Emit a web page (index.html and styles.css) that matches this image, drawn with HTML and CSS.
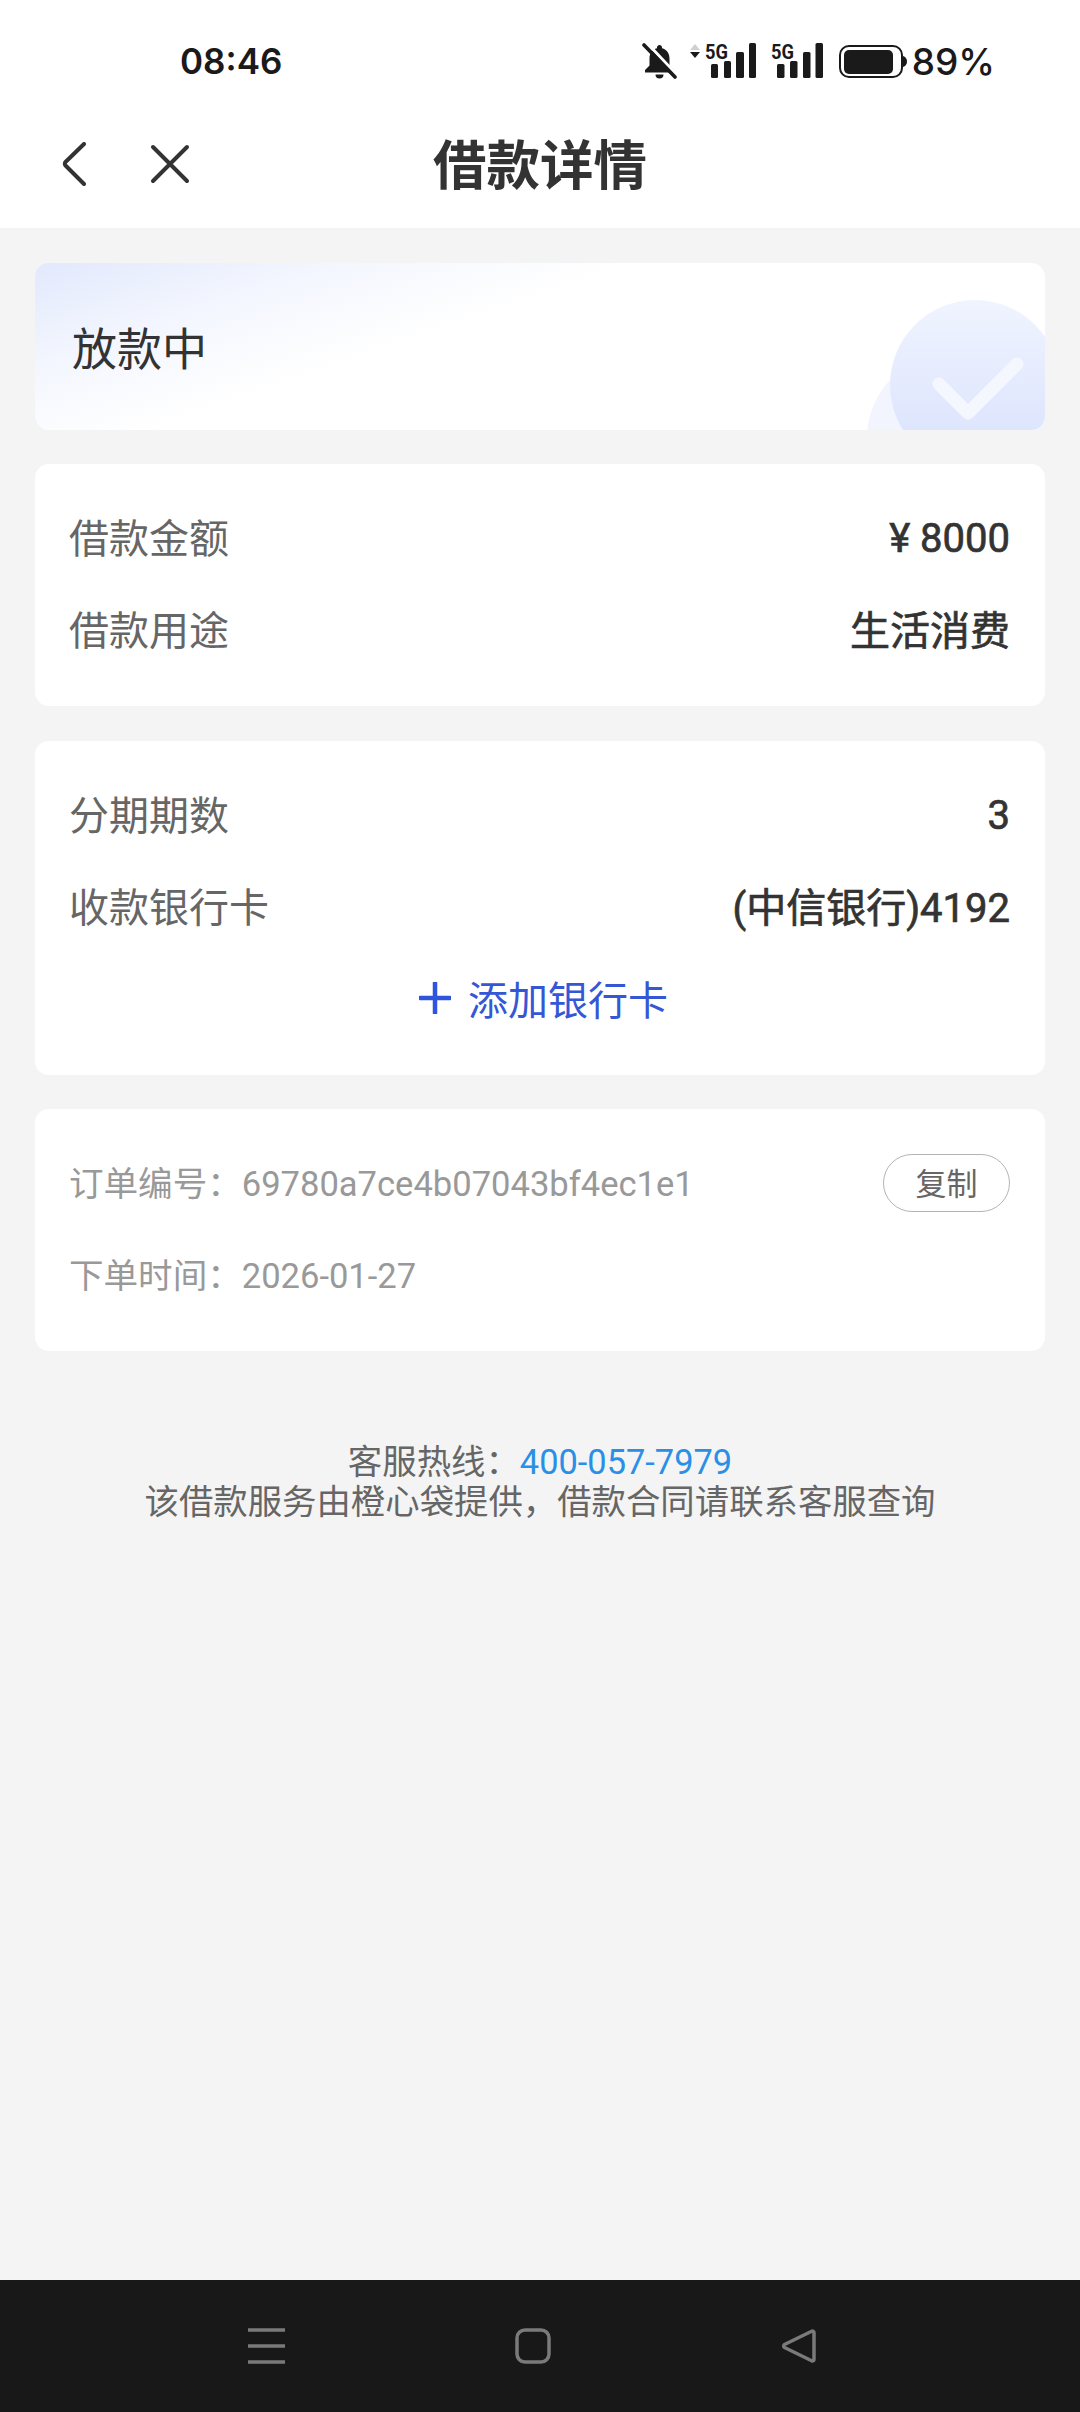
FILE: index.html
```html
<!DOCTYPE html>
<html lang="zh-CN">
<head>
<meta charset="utf-8">
<title>借款详情</title>
<link rel="stylesheet" href="styles.css">
</head>
<body>
<div class="page">
  <div class="status">
    <span class="time">08:46</span>
    <div class="status-right">
      <svg class="ic-bell" width="35" height="36" viewBox="0 0 35 36">
        <path fill="#1a1a1a" d="M17.500 2c-1.400 0-2.500 1-2.500 2.400v.8c-5 1.300-7.500 5.400-7.500 10.300v7L3 27v2.500h29V27l-4.500-4.500v-7c0-4.900-2.500-9-7.500-10.300v-.8C20 3 18.900 2 17.500 2z"/>
        <path fill="#1a1a1a" d="M13.500 31.500a4 4 0 0 0 8 0z"/>
        <path stroke="#fff" stroke-width="3" d="M5 0l31 33"/>
        <path stroke="#1a1a1a" stroke-width="3.600" stroke-linecap="round" d="M2 2l31 32"/>
      </svg>
      <svg class="ic-sim1" width="66" height="44" viewBox="0 -4 66 44">
        <path fill="#d0d0d0" d="M5 1l5 6H0z"/>
        <path fill="#1a1a1a" d="M5 15l5-6H0z"/>
        <text class="five-g" x="15" y="15.500" textLength="23" lengthAdjust="spacingAndGlyphs">5G</text>
        <rect x="21" y="21" width="7" height="14" rx="1.500" fill="#1a1a1a"/>
        <rect x="34" y="18" width="7" height="17" rx="1.500" fill="#1a1a1a"/>
        <rect x="46" y="9" width="8" height="26" rx="1.500" fill="#1a1a1a"/>
        <rect x="59" y="0" width="7" height="35" rx="1.500" fill="#1a1a1a"/>
      </svg>
      <svg class="ic-sim2" width="52" height="44" viewBox="0 -4 52 44">
        <text class="five-g" x="0" y="15.500" textLength="23" lengthAdjust="spacingAndGlyphs">5G</text>
        <rect x="6" y="21" width="7.500" height="14" rx="1.500" fill="#1a1a1a"/>
        <rect x="19" y="18" width="7.500" height="17" rx="1.500" fill="#1a1a1a"/>
        <rect x="32" y="9" width="7.500" height="26" rx="1.500" fill="#1a1a1a"/>
        <rect x="44.500" y="0" width="7.500" height="35" rx="1.500" fill="#1a1a1a"/>
      </svg>
      <svg class="ic-batt" width="68" height="36" viewBox="0 0 68 36">
        <rect x="1" y="3" width="62" height="31" rx="9" fill="none" stroke="#1a1a1a" stroke-width="2"/>
        <rect x="5" y="7" width="49" height="24" rx="5" fill="#1a1a1a"/>
        <path fill="#1a1a1a" d="M64 13c2.500.5 4 2.800 4 5.500s-1.500 5-4 5.500z"/>
      </svg>
      <span class="pct">89%</span>
    </div>
  </div>

  <header class="nav">
    <div class="nav-icons">
      <svg width="24" height="44" viewBox="0 0 24 44"><path d="M22 2 3.500 20a2.500 2.500 0 0 0 0 3.500L22 42" fill="none" stroke="#333" stroke-width="4" stroke-linecap="round" stroke-linejoin="round"/></svg>
      <svg width="40" height="40" viewBox="0 0 40 40"><path d="M3 3l34 34M37 3 3 37" fill="none" stroke="#333" stroke-width="4" stroke-linecap="round"/></svg>
    </div>
    <h1 class="title">借款详情</h1>
  </header>

  <main class="main">
    <section class="card state">
      <span class="state-text">放款中</span>
      <svg class="state-art" width="178" height="167" viewBox="0 0 178 167" aria-hidden="true">
        <defs>
          <linearGradient id="disc" x1="0" y1="0" x2="0" y2="1">
            <stop offset="0" stop-color="#f0f4ff"/>
            <stop offset="0.8" stop-color="#dde5fd"/>
            <stop offset="1" stop-color="#dde5fd"/>
          </linearGradient>
        </defs>
        <circle cx="85" cy="175" r="85" fill="#f3f5fe"/>
        <circle cx="108" cy="122" r="85" fill="url(#disc)"/>
        <path d="M72 121l29 29 49-49" fill="none" stroke="#f5f7ff" stroke-width="13" stroke-linecap="round" stroke-linejoin="round"/>
      </svg>
    </section>

    <section class="card rows">
      <div class="row"><span class="label">借款金额</span><span class="value num">¥ 8000</span></div>
      <div class="row"><span class="label">借款用途</span><span class="value">生活消费</span></div>
    </section>

    <section class="card rows plan">
      <div class="row"><span class="label">分期期数</span><span class="value num">3</span></div>
      <div class="row"><span class="label">收款银行卡</span><span class="value">(中信银行)4192</span></div>
      <div class="row row-add">
        <svg width="32" height="32" viewBox="0 0 32 32"><path d="M16 1v30M1 16h30" stroke="#2f55dc" stroke-width="4.500" stroke-linecap="round"/></svg>
        <span class="add-text">添加银行卡</span>
      </div>
    </section>

    <section class="card rows">
      <div class="row small"><span>订单编号：69780a7ce4b07043bf4ec1e1</span><button class="copy">复制</button></div>
      <div class="row small"><span>下单时间：2026-01-27</span></div>
    </section>

    <footer class="foot">
      <div>客服热线：<span class="phone">400-057-7979</span></div>
      <div>该借款服务由橙心袋提供，借款合同请联系客服查询</div>
    </footer>
  </main>

  <nav class="sysnav">
    <svg width="37" height="36" viewBox="0 0 37 36"><path d="M0 2h37M0 18h37M0 34h37" stroke="#7a7a7a" stroke-width="3.500"/></svg>
    <svg width="36" height="36" viewBox="0 0 36 36"><rect x="2" y="2" width="32" height="32" rx="8" fill="none" stroke="#7a7a7a" stroke-width="3.500"/></svg>
    <svg width="36" height="36" viewBox="0 0 36 36"><path d="M33 4.500a1.500 1.500 0 0 0-2.300-1.300L3.500 16.500a1.800 1.800 0 0 0 0 3l27.200 13.300a1.500 1.500 0 0 0 2.300-1.300z" fill="none" stroke="#7a7a7a" stroke-width="3.500" stroke-linejoin="round"/></svg>
  </nav>
</div>
</body>
</html>
```
FILE: styles.css
```css
* { box-sizing: border-box; }
html, body { margin: 0; padding: 0; }
body {
  font-family: Roboto, "Noto Sans CJK SC", sans-serif;
  background: #f4f4f4;
  color: #333;
}
.page {
  width: 1080px;
  height: 2412px;
  display: flex;
  flex-direction: column;
  overflow: hidden;
}

/* status bar */
.status {
  height: 100px;
  padding: 22px 85px 0 180px;
  background: #fff;
  display: flex;
  align-items: center;
  justify-content: space-between;
  color: #1a1a1a;
  font-family: Inter, Roboto, sans-serif;
}
.time { font-size: 35px; font-weight: 600; }
.status-right { display: flex; align-items: center; }
.ic-bell { margin-right: 13px; }
.ic-sim1 { margin-right: 15px; }
.ic-sim2 { margin-right: 16px; }
.ic-batt { margin-right: 5px; }
.pct { font-size: 37px; font-weight: 500; }
.five-g {
  font-family: Roboto, sans-serif;
  font-size: 21px;
  font-weight: 700;
  fill: #1a1a1a;
}

/* page header */
.nav {
  height: 128px;
  padding-top: 5px;
  background: #fff;
  position: relative;
  display: flex;
  align-items: center;
  justify-content: center;
}
.nav-icons {
  position: absolute;
  left: 62px;
  top: 0;
  bottom: 0;
  display: flex;
  align-items: center;
  gap: 64px;
}
.title {
  margin: 0;
  font-size: 53.5px;
  font-weight: 700;
  color: #333;
  line-height: 1;
}

/* content */
.main {
  flex: 1;
  padding: 35px 35px 0;
  display: flex;
  flex-direction: column;
  gap: 34px;
}
.card {
  background: #fff;
  border-radius: 14px;
}
.state {
  height: 167px;
  padding: 0 37px;
  display: flex;
  align-items: center;
  position: relative;
  overflow: hidden;
  background: linear-gradient(161deg, #e2e9fd 0%, #f3f6fe 20%, #fff 40%);
}
.state-text { font-size: 45px; color: #333; }
.state-art { position: absolute; right: 0; bottom: 0; }

.rows { padding: 28px 35px 30px 34px; }
.plan { margin-top: 1px; }
.row {
  height: 92px;
  padding-bottom: 5px;
  display: flex;
  align-items: center;
  justify-content: space-between;
}
.label { font-size: 40px; color: #666; }
.value {
  font-size: 40px;
  font-weight: 400;
  color: #333;
  -webkit-text-stroke: 0.7px #333;
}
.num { margin-top: 6px; }
.row-add { justify-content: center; gap: 17px; padding: 0 0 2px 8px; }
.add-text { font-size: 40px; color: #3557d6; }
.small { font-size: 34.56px; color: #999; padding-bottom: 0; }
.small span { padding-bottom: 5px; }
.copy {
  width: 127px;
  height: 58px;
  padding: 0 0 4px;
  border: 1px solid #b4b4b4;
  border-radius: 29px;
  background: #fff;
  font: inherit;
  font-size: 31px;
  color: #666;
}
.foot {
  margin-top: 57px;
  text-align: center;
  font-size: 34.4px;
  line-height: 40px;
  color: #666;
}
.phone { color: #2a8fe6; }

/* system navigation */
.sysnav {
  height: 132px;
  background: #181818;
  padding: 48px 263px 0 248px;
  display: flex;
  justify-content: space-between;
  align-items: flex-start;
}
```
